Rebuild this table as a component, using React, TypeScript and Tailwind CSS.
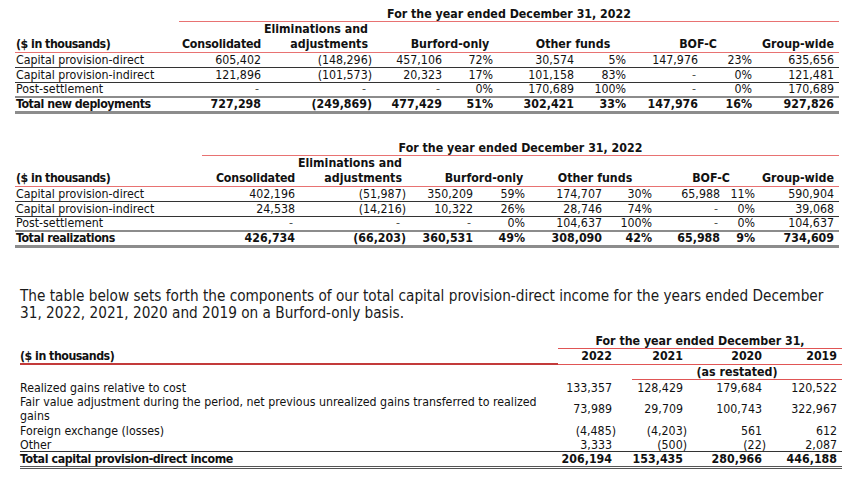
import React from "react";

type Row = { label: string; vals: string[]; total?: boolean };

function Cell({ v, pr = "pr-[1px]" }: { v: string; pr?: string }) {
  const paren = v.startsWith("(");
  const dash = v === "-";
  return (
    <div className={`text-right whitespace-nowrap ${pr}`}>
      {paren ? (
        <span className="inline-block -mr-[4px]">{v}</span>
      ) : dash ? (
        <span className="inline-block mr-[2px] text-[#555]">{v}</span>
      ) : (
        v
      )}
    </div>
  );
}

function SegTable({
  grid,
  rows,
  bMl,
  oMl,
  cMl,
}: {
  grid: string;
  rows: Row[];
  bMl: string;
  oMl: string;
  cMl: string;
}) {
  return (
    <div className="w-[824px] ml-[15px] text-[12.3px] text-[#111]">
      <div className={`${grid} h-[15px]`}>
        <div />
        <div className="col-span-9 border-b border-[#e87272] text-center font-bold leading-[14px] whitespace-nowrap">
          For the year ended December 31, 2022
        </div>
      </div>
      <div className={`${grid} h-[31px] border-b border-[#e87272] font-bold leading-[15px]`}>
        <div className="flex flex-col justify-end pl-[1px] tracking-[-0.5px] whitespace-nowrap">($ in thousands)</div>
        <div className="flex flex-col justify-end text-right pr-[1px] tracking-[-0.2px]">Consolidated</div>
        <div className="flex flex-col justify-end text-right pr-[1px] whitespace-nowrap">
          <div>Eliminations and</div>
          <div>adjustments</div>
        </div>
        <div className="col-span-2 flex flex-col justify-end">
          <div className={`${bMl} w-[100px] text-center whitespace-nowrap`}>Burford-only</div>
        </div>
        <div className="col-span-2 flex flex-col justify-end">
          <div className={`${oMl} w-[100px] text-center whitespace-nowrap`}>Other funds</div>
        </div>
        <div className="col-span-2 flex flex-col justify-end">
          <div className={`${cMl} w-[100px] text-center whitespace-nowrap`}>BOF-C</div>
        </div>
        <div className="flex flex-col justify-end text-right pr-[5px] whitespace-nowrap">Group-wide</div>
      </div>
      {rows.map((r, i) => {
        const cls = r.total
          ? "h-[18px] border-t-2 border-b-[3px] border-[#8c8c8c] font-bold leading-[13px]"
          : i < 2
          ? "h-[15px] border-b border-[#333] leading-[14px]"
          : "h-[13px] leading-[13px]";
        return (
          <div key={i} className={`${grid} ${cls}`}>
            <div className={`pl-[1px] whitespace-nowrap ${r.total ? "tracking-[-0.45px]" : ""}`}>{r.label}</div>
            {r.vals.map((v, j) => (
              <Cell key={j} v={v} pr={j === r.vals.length - 1 ? "pr-[5px]" : "pr-[1px]"} />
            ))}
          </div>
        );
      })}
    </div>
  );
}

const t1: Row[] = [
  { label: "Capital provision-direct", vals: ["605,402", "(148,296)", "457,106", "72%", "30,574", "5%", "147,976", "23%", "635,656"] },
  { label: "Capital provision-indirect", vals: ["121,896", "(101,573)", "20,323", "17%", "101,158", "83%", "-", "0%", "121,481"] },
  { label: "Post-settlement", vals: ["-", "-", "-", "0%", "170,689", "100%", "-", "0%", "170,689"] },
  { label: "Total new deployments", vals: ["727,298", "(249,869)", "477,429", "51%", "302,421", "33%", "147,976", "16%", "927,826"], total: true },
];

const t2: Row[] = [
  { label: "Capital provision-direct", vals: ["402,196", "(51,987)", "350,209", "59%", "174,707", "30%", "65,988", "11%", "590,904"] },
  { label: "Capital provision-indirect", vals: ["24,538", "(14,216)", "10,322", "26%", "28,746", "74%", "-", "0%", "39,068"] },
  { label: "Post-settlement", vals: ["-", "-", "-", "0%", "104,637", "100%", "-", "0%", "104,637"] },
  { label: "Total realizations", vals: ["426,734", "(66,203)", "360,531", "49%", "308,090", "42%", "65,988", "9%", "734,609"], total: true },
];

const g3 = "grid grid-cols-[538px_55px_71px_79px_79px]";

function Row3({ label, vals, cls = "", labelCls = "" }: { label: React.ReactNode; vals: string[]; cls?: string; labelCls?: string }) {
  return (
    <div className={`${g3} items-center ${cls}`}>
      <div className={labelCls}>{label}</div>
      {vals.map((v, j) => (
        <Cell key={j} v={v} pr={j === 3 ? "pr-[5px]" : "pr-[1px]"} />
      ))}
    </div>
  );
}

export default function App() {
  return (
    <div className="w-[858px] h-[485px] overflow-hidden bg-white font-[family-name:'DejaVu_Sans_Condensed','Liberation_Sans',sans-serif]">
      <div className="pt-[7px]">
        <SegTable
          grid="grid grid-cols-[164px_83px_107px_74px_51px_81px_52px_72px_54px_86px]"
          rows={t1}
          bMl="ml-[31px]"
          oMl="ml-[29px]"
          cMl="ml-[21px]"
        />
      </div>
      <div className="mt-[27px]">
        <SegTable
          grid="grid grid-cols-[187px_94px_107px_71px_52px_77px_50px_68px_35px_83px]"
          rows={t2}
          bMl="ml-[31px]"
          oMl="ml-[19px]"
          cMl="ml-[8px]"
        />
      </div>
      <p className="mt-[40px] ml-[20px] text-[15.2px] leading-[17px] text-[#1a1a1a] whitespace-nowrap">
        The table below sets forth the components of our total capital provision-direct income for the years ended December
        <br />
        31, 2022, 2021, 2020 and 2019 on a Burford-only basis.
      </p>
      <div className="mt-[12px] ml-[20px] w-[822px] text-[12.3px] text-[#111] leading-[14px]">
        <div className={`${g3} h-[15px]`}>
          <div />
          <div className="col-span-4 border-b border-[#e05555] text-center font-bold whitespace-nowrap">
            For the year ended December 31,
          </div>
        </div>
        <div className={`${g3} h-[16px] font-bold`}>
          <div className="border-b-2 border-[#c33a3a] tracking-[-0.5px]">($ in thousands)</div>
          <div className="border-b border-[#e05555] text-right pr-[1px]">2022</div>
          <div className="border-b border-[#e05555] text-right pr-[1px]">2021</div>
          <div className="border-b border-[#e05555] text-right pr-[1px]">2020</div>
          <div className="border-b border-[#e05555] text-right pr-[5px]">2019</div>
        </div>
        <div className={`${g3} h-[15px] font-bold`}>
          <div />
          <div />
          <div className="col-span-3">
            <div className="ml-[19px] border-b border-[#e05555] text-center h-[15px]">(as restated)</div>
          </div>
        </div>
        <Row3 cls="mt-[1px] h-[14px]" label="Realized gains relative to cost" vals={["133,357", "128,429", "179,684", "120,522"]} />
        <Row3
          cls="h-[28px]"
          label={
            <>
              Fair value adjustment during the period, net previous unrealized gains transferred to realized
              <br />
              gains
            </>
          }
          labelCls="whitespace-nowrap"
          vals={["73,989", "29,709", "100,743", "322,967"]}
        />
        <Row3 cls="mt-[1px] h-[14px]" label="Foreign exchange (losses)" vals={["(4,485)", "(4,203)", "561", "612"]} />
        <Row3 cls="h-[14px] border-b border-[#333]" label="Other" vals={["3,333", "(500)", "(22)", "2,087"]} />
        <Row3
          cls="h-[17px] border-b-[3px] border-double border-[#555] font-bold"
          labelCls="tracking-[-0.4px] whitespace-nowrap"
          label="Total capital provision-direct income"
          vals={["206,194", "153,435", "280,966", "446,188"]}
        />
      </div>
    </div>
  );
}
